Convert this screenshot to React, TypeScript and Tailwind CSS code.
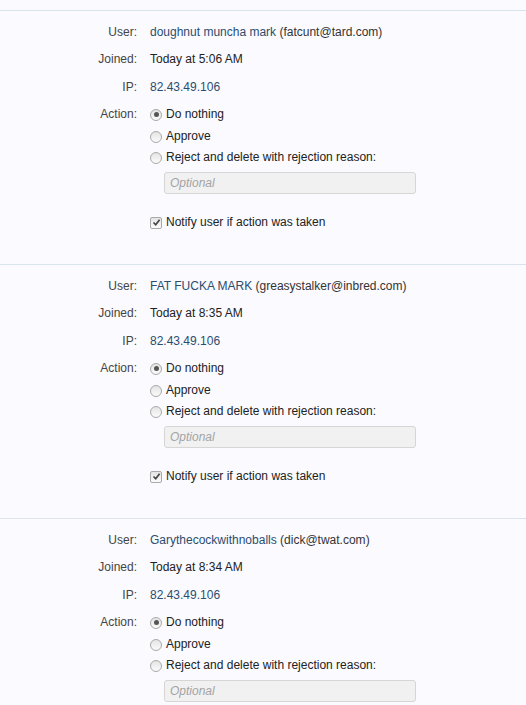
import React from "react";

type Entry = { name: string; email: string; joined: string; ip: string };

const entries: Entry[] = [
  { name: "doughnut muncha mark", email: "fatcunt@tard.com", joined: "Today at 5:06 AM", ip: "82.43.49.106" },
  { name: "FAT FUCKA MARK", email: "greasystalker@inbred.com", joined: "Today at 8:35 AM", ip: "82.43.49.106" },
  { name: "Garythecockwithnoballs", email: "dick@twat.com", joined: "Today at 8:34 AM", ip: "82.43.49.106" },
];

function Radio({ checked }: { checked?: boolean }) {
  return (
    <span className="inline-flex w-[12px] h-[12px] rounded-full border border-[#a9a9a9] bg-gradient-to-b from-[#e4e4e4] to-[#fbfbfb] items-center justify-center shrink-0">
      {checked && <span className="w-[5px] h-[5px] rounded-full bg-[#555]" />}
    </span>
  );
}

function Checkbox() {
  return (
    <span className="inline-flex w-[12px] h-[12px] rounded-[2px] border border-[#a9a9a9] bg-gradient-to-b from-[#e4e4e4] to-[#fbfbfb] items-center justify-center shrink-0">
      <svg width="9" height="9" viewBox="0 0 9 9">
        <path d="M1.5 4.5 L3.7 6.8 L7.6 1.8" fill="none" stroke="#444" strokeWidth="1.7" />
      </svg>
    </span>
  );
}

function Row({ label, children, extra }: { label: string; children: React.ReactNode; extra?: string }) {
  return (
    <div className={"flex " + (extra ?? "")}>
      <div className="w-[137px] text-right text-[#444] shrink-0">{label}</div>
      <div className="pl-[13px] flex-1">{children}</div>
    </div>
  );
}

function Block({ e }: { e: Entry }) {
  return (
    <div className="border-t border-[#d9e4ee] pt-[13px] pb-[33px]">
      <div className="flex flex-col gap-[10px]">
        <Row label="User:">
          <span className="text-[#2b4d6e]">{e.name}</span>{" "}
          <span className="text-[#333]">({e.email})</span>
        </Row>
        <Row label="Joined:">
          <span className="text-[#222]">{e.joined}</span>
        </Row>
        <Row label="IP:" extra="mt-[1px]">
          <span className="text-[#2b4d6e]">{e.ip}</span>
        </Row>
        <Row label="Action:">
          <div className="flex flex-col">
            <div className="flex items-center gap-[4px] h-[17px]">
              <Radio checked />
              <span className="text-[#222]">Do nothing</span>
            </div>
            <div className="flex items-center gap-[4px] h-[17px] mt-[5px]">
              <Radio />
              <span className="text-[#222]">Approve</span>
            </div>
            <div className="flex items-center gap-[4px] h-[17px] mt-[4px]">
              <Radio />
              <span className="text-[#222]">Reject and delete with rejection reason:</span>
            </div>
            <div className="ml-[14px] mt-[6px] w-[252px] h-[22px] border border-[#d6d6d6] rounded-[3px] bg-[#f1f1f1] flex items-center px-[5px]">
              <span className="italic text-[#a3a3a3] text-[12px]">Optional</span>
            </div>
            <div className="flex items-center gap-[4px] h-[17px] mt-[20px]">
              <Checkbox />
              <span className="text-[#222]">Notify user if action was taken</span>
            </div>
          </div>
        </Row>
      </div>
    </div>
  );
}

export default function App() {
  return (
    <div
      className="w-[526px] h-[705px] overflow-hidden bg-[#fafaff] pt-[10px] text-[12px] leading-[17px]"
      style={{ fontFamily: '"Liberation Sans", Arial, sans-serif' }}
    >
      {entries.map((e, i) => (
        <Block key={i} e={e} />
      ))}
    </div>
  );
}
